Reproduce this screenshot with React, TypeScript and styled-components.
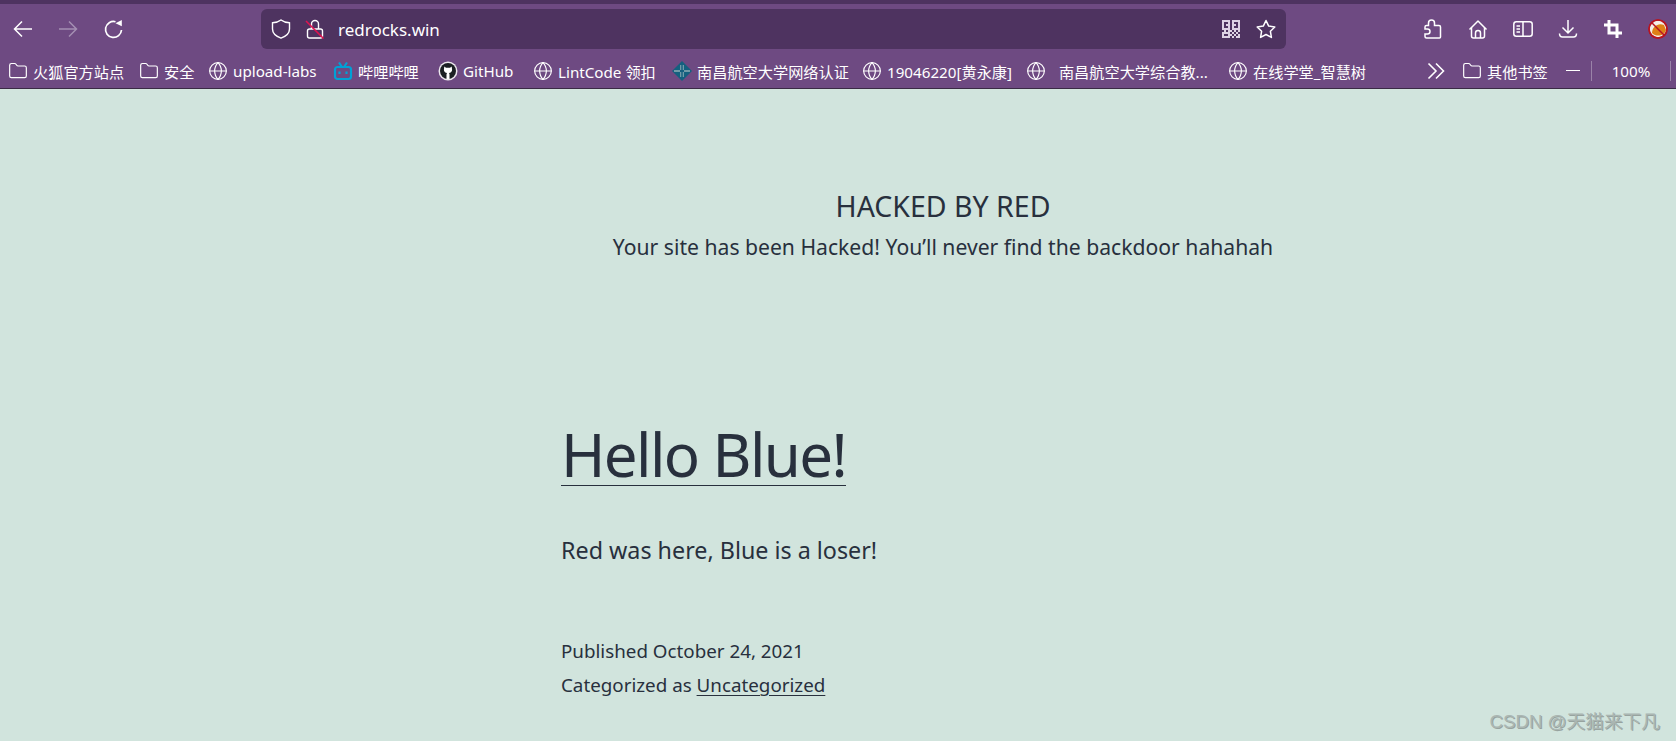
import React from 'react';
import styled, { createGlobalStyle } from 'styled-components';
import { Folder, Globe } from 'lucide-react';

const uiFont = `"Noto Sans", "Open Sans", "Noto Sans CJK SC", sans-serif`;

const GlobalStyle = createGlobalStyle`
  html, body {
    margin: 0;
    padding: 0;
    height: 100%;
    overflow: hidden;
    background: #d1e4dd;
  }
`;

const Page = styled.div`
  width: 1676px;
  height: 741px;
  position: relative;
  overflow: hidden;
  display: flex;
  flex-direction: column;
  background: #d1e4dd;
  font-family: ${uiFont};
`;

const TitleStrip = styled.div`
  height: 4px;
  background: #4e3360;
`;

const Toolbar = styled.div`
  height: 45px;
  box-sizing: border-box;
  padding-top: 5px;
  background: #6e4a82;
  display: flex;
  align-items: flex-start;
  color: #fff;
`;

const NavGroup = styled.div`
  width: 261px;
  height: 40px;
  padding-left: 13px;
  box-sizing: border-box;
  display: flex;
  align-items: center;
  gap: 25px;
`;

const UrlBar = styled.div`
  width: 1025px;
  height: 40px;
  box-sizing: border-box;
  padding: 0 10px;
  border-radius: 6px;
  background: #4e3360;
  display: flex;
  align-items: center;
`;

const LockSlot = styled.span`
  display: flex;
  margin-left: 14px;
`;

const UrlText = styled.span`
  font-size: 17px;
  margin-left: 13px;
  color: #fff;
  flex: 1;
`;

const UrlIcons = styled.div`
  display: flex;
  align-items: center;
  gap: 16px;
`;

const Actions = styled.div`
  flex: 1;
  height: 40px;
  padding-left: 137px;
  box-sizing: border-box;
  display: flex;
  align-items: center;
  gap: 25px;
`;

const Bookmarks = styled.div`
  height: 40px;
  box-sizing: border-box;
  padding: 4px 0 0 8px;
  background: #6e4a82;
  border-bottom: 1px solid #3a2a45;
  display: flex;
  align-items: center;
  color: #fff;
  font-size: 15.2px;
  white-space: nowrap;
`;

const Mark = styled.div<{ $width: number; $offset?: number }>`
  width: ${(p) => p.$width}px;
  margin-left: ${(p) => p.$offset ?? 0}px;
  flex: none;
  display: flex;
  align-items: center;
  gap: 5px;
  white-space: pre;
`;

const Zoom = styled.span`
  border-left: 1px solid #9a83a8;
  border-right: 1px solid #9a83a8;
  box-sizing: border-box;
  width: 80px;
  height: 20px;
  line-height: 20px;
  text-align: center;
  margin-left: 11px;
`;

const Minus = styled.span`
  flex: none;
  width: 14px;
  height: 1px;
  background: #fff;
  margin-left: 9px;
`;

const Content = styled.main`
  flex: 1;
  color: #28303d;
  font-family: "Noto Sans", "Open Sans", sans-serif;
`;

const Banner = styled.header`
  padding: 99px 0 0 214px;
  margin-left: -4px;
  text-align: center;
`;

const BannerTitle = styled.h1`
  margin: 0;
  font-size: 28.5px;
  line-height: 36px;
  font-weight: 400;
`;

const BannerText = styled.p`
  margin: 8px 0 0;
  font-size: 21.15px;
  line-height: 30px;
`;

const Article = styled.article`
  margin-left: 561px;
  padding-top: 157px;
`;

const PostTitle = styled.h2`
  margin: 0;
  display: inline-block;
  font-size: 60px;
  font-weight: 400;
  letter-spacing: -1.6px;
  line-height: 70px;
  border-bottom: 1px solid #28303d;
  height: 66px;
`;

const PostText = styled.p`
  margin: 48px 0 0;
  font-size: 23.3px;
  line-height: 32px;
`;

const Meta = styled.div`
  margin-top: 68px;
  font-size: 18.8px;
  line-height: 34px;
`;

const MetaLink = styled.span`
  text-decoration: underline;
  text-underline-offset: 3px;
  text-decoration-thickness: 1px;
`;

const Watermark = styled.span`
  position: absolute;
  right: 16px;
  bottom: 8px;
  font-family: "Liberation Sans", "Noto Sans CJK SC", sans-serif;
  font-size: 18.7px;
  color: #aab6b2;
  text-shadow: 1px 1px 0 #97a39f;
`;

const Icon = styled.svg.attrs({ viewBox: '0 0 20 20', fill: 'none', width: 20, height: 20 })<{
  $tone?: string;
  $weight?: number;
}>`
  flex: none;
  display: block;
  stroke: ${(p) => p.$tone ?? '#fff'};
  stroke-width: ${(p) => p.$weight ?? 1.5};
`;

const BackIcon = () => (
  <Icon>
    <path d="M1.500 10H19M9 2.500 1.500 10 9 17.500" />
  </Icon>
);

const ForwardIcon = () => (
  <Icon $tone="#a48fb2">
    <path d="M1 10h17.500M11 2.500l7.500 7.500-7.500 7.500" />
  </Icon>
);

const ReloadIcon = () => (
  <Icon $weight={1.7}>
    <path d="M18.500 11a8 8 0 1 1-6-8.300" />
    <path d="M12.500 4.300 18.800 1v6.300z" fill="#fff" stroke="none" />
  </Icon>
);

const ShieldIcon = () => (
  <Icon $weight={1.4}>
    <path d="M10 1C12 2.600 15 3.600 18.500 3.800V10C18.500 14 14.500 17.500 10 19.200 5.500 17.500 1.500 14 1.500 10V3.800C5 3.600 8 2.600 10 1z" />
  </Icon>
);

const LockOffIcon = () => (
  <Icon $weight={1.4}>
    <rect x="2.500" y="10" width="15" height="9" rx="2" />
    <path d="M6.500 10V5a3.500 3.500 0 0 1 7 0v5" />
    <path d="M1 2 18.500 19.500" stroke="#e0134f" strokeWidth="1.600" />
  </Icon>
);

const qrRows = [
  '111101111',
  '100101001',
  '101101101',
  '100101001',
  '111101111',
  '010110101',
  '111101010',
  '100110101',
  '111101011',
];

const QrIcon = () => (
  <svg width="18" height="18" viewBox="0 0 9 9" fill="#ddd2e4">
    {qrRows.map((row, y) =>
      row.split('').map((cell, x) => (cell === '1' ? <rect key={`${x}-${y}`} x={x} y={y} width="1" height="1" /> : null)),
    )}
  </svg>
);

const StarIcon = () => (
  <Icon $weight={1.5}>
    <path d="M10 1.500l2.700 5.600 6.100.9-4.400 4.300 1 6.100L10 15.500l-5.400 2.900 1-6.100L1.200 8l6.100-.9z" strokeLinejoin="round" />
  </Icon>
);

const PuzzleIcon = () => (
  <Icon>
    <path d="M5.500 6.500V4a3 3 0 0 1 6 0v2.500H16A1.500 1.500 0 0 1 17.500 8v10a1 1 0 0 1-1 1H3.500A1.500 1.500 0 0 1 2 17.500V15h2.500a2.500 2.500 0 0 0 0-5H2V8a1.500 1.500 0 0 1 1.500-1.500z" />
  </Icon>
);

const HomeIcon = () => (
  <Icon>
    <path d="M1.500 10.500 10 2l8.500 8.500" strokeLinejoin="round" />
    <path d="M3.500 8.500V17a2 2 0 0 0 2 2h9a2 2 0 0 0 2-2V8.500" />
    <path d="M7.500 19v-5a2.500 2.500 0 0 1 5 0v5" />
  </Icon>
);

const SidebarIcon = () => (
  <Icon>
    <rect x="0.800" y="2.800" width="18.400" height="14.400" rx="2.500" />
    <path d="M10 2.800v14.400M3.500 7h3.500M3.500 10h3.500M3.500 13h3.500" />
  </Icon>
);

const DownloadIcon = () => (
  <Icon>
    <path d="M10 1v13M4.500 8.500 10 14l5.500-5.500" />
    <path d="M1.500 14.500c0 2.500 1 3.500 3 3.500h11c2 0 3-1 3-3.500" />
  </Icon>
);

const CropIcon = () => (
  <Icon $weight={3}>
    <path d="M6 1v13h13M1 6h13v13" />
  </Icon>
);

const BlockedIcon = () => (
  <Icon $tone="#b81420">
    <circle cx="10" cy="10" r="9" fill="#f4efe8" />
    <path d="M4 14C4 8 10 3.500 16 6l2 5c-1 5-9 8-14 3z" fill="#df8116" stroke="none" />
    <circle cx="10" cy="10" r="9" />
    <path d="M3.800 3.800 16.200 16.200" />
  </Icon>
);

const ChevronsIcon = () => (
  <Icon $weight={1.6}>
    <path d="M2.500 2.500 10 10l-7.500 7.500M10 2.500 17.500 10 10 17.500" />
  </Icon>
);

const BiliIcon = () => (
  <Icon $tone="#00a1d6" $weight={2.2}>
    <rect x="2" y="6" width="16" height="12" rx="2.500" />
    <path d="M6 1.500 9 6M14 1.500 11 6" />
    <path d="M6.500 10.500v2.500M13.500 10.500v2.500" />
  </Icon>
);

const GithubIcon = () => (
  <svg width="20" height="20" viewBox="0 0 20 20">
    <circle cx="10" cy="10" r="9.500" fill="#ece8ee" />
    <circle cx="10" cy="10" r="8" fill="#1b1f23" />
    <path d="M6.300 5.500 8 6.800h4l1.700-1.300.4 3.200c0 2-1.400 3.200-3.200 3.400.4.400.6.900.6 1.500V18H8.500v-4.400c0-.6.200-1.100.6-1.500-1.800-.2-3.200-1.400-3.200-3.400z" fill="#fff" />
  </svg>
);

const SchoolIcon = () => (
  <svg width="20" height="20" viewBox="0 0 20 20">
    <path d="M10 0 20 10 10 20 0 10z" fill="#14607f" />
    <path d="M2 9h6V4h1.300v5H8v2h1.300v5H8v-5H2zM18 9h-6V4h-1.300v5H12v2h-1.300v5H12v-5h6z" fill="#6f9aa8" />
  </svg>
);

const folder = <Folder size={20} strokeWidth={1.4} />;
const globe = <Globe size={20} strokeWidth={1.4} />;

const bookmarks: { label: string; width: number; icon: React.ReactNode }[] = [
  { label: '火狐官方站点', width: 131, icon: folder },
  { label: '安全', width: 69, icon: folder },
  { label: 'upload-labs', width: 125, icon: globe },
  { label: '哔哩哔哩', width: 105, icon: <BiliIcon /> },
  { label: 'GitHub', width: 95, icon: <GithubIcon /> },
  { label: 'LintCode 领扣', width: 139, icon: globe },
  { label: '南昌航空大学网络认证', width: 190, icon: <SchoolIcon /> },
  { label: '19046220[黄永康]', width: 164, icon: globe },
  { label: '  南昌航空大学综合教...', width: 202, icon: globe },
  { label: '在线学堂_智慧树', width: 198, icon: globe },
];

export default function App() {
  return (
    <Page>
      <GlobalStyle />
      <TitleStrip />
      <Toolbar>
        <NavGroup>
          <BackIcon />
          <ForwardIcon />
          <ReloadIcon />
        </NavGroup>
        <UrlBar>
          <ShieldIcon />
          <LockSlot>
            <LockOffIcon />
          </LockSlot>
          <UrlText>redrocks.win</UrlText>
          <UrlIcons>
            <QrIcon />
            <StarIcon />
          </UrlIcons>
        </UrlBar>
        <Actions>
          <PuzzleIcon />
          <HomeIcon />
          <SidebarIcon />
          <DownloadIcon />
          <CropIcon />
          <BlockedIcon />
        </Actions>
      </Toolbar>
      <Bookmarks>
        {bookmarks.map((b) => (
          <Mark key={b.label} $width={b.width}>
            {b.icon}
            <span>{b.label}</span>
          </Mark>
        ))}
        <ChevronsIcon />
        <Mark $width={95} $offset={16}>
          {folder}
          <span>其他书签</span>
        </Mark>
        <Minus />
        <Zoom>100%</Zoom>
      </Bookmarks>
      <Content>
        <Banner>
          <BannerTitle>HACKED BY RED</BannerTitle>
          <BannerText>Your site has been Hacked! You’ll never find the backdoor hahahah</BannerText>
        </Banner>
        <Article>
          <PostTitle>Hello Blue!</PostTitle>
          <PostText>Red was here, Blue is a loser!</PostText>
          <Meta>
            <div>Published October 24, 2021</div>
            <div>
              Categorized as <MetaLink>Uncategorized</MetaLink>
            </div>
          </Meta>
        </Article>
      </Content>
      <Watermark>CSDN @天猫来下凡</Watermark>
    </Page>
  );
}
